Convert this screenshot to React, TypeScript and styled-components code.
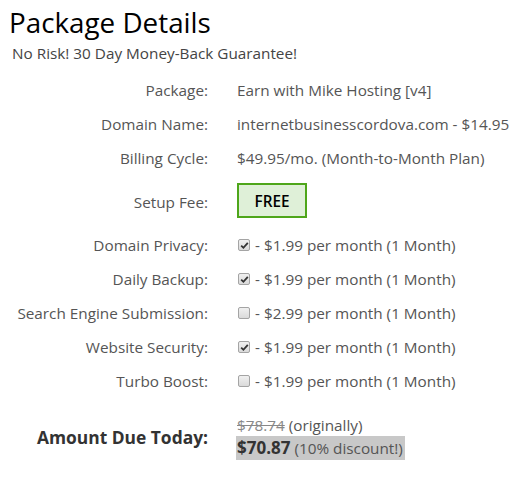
import React from "react";
import styled, { createGlobalStyle } from "styled-components";

const Global = createGlobalStyle`
  html, body { margin: 0; padding: 0; background: #fff; }
  body { font-family: "Open Sans", "Noto Sans", sans-serif; color: #555; }
`;

const Page = styled.div`
  padding: 0 10px 0 9px;
`;

const Title = styled.h1`
  margin: 0;
  padding-top: 4px;
  font-size: 27.8px;
  font-weight: 400;
  color: #000;
  line-height: 36px;
`;

const Subtitle = styled.div`
  margin: 3px 0 0 3px;
  font-size: 15.3px;
  color: #444;
  line-height: 20px;
`;

const Grid = styled.div`
  display: grid;
  grid-template-columns: 199px auto;
  column-gap: 29px;
  margin-top: 10px;
  align-items: center;
`;

const Label = styled.div<{ $bold?: boolean }>`
  text-align: right;
  font-size: ${(p) => (p.$bold ? "17.4px" : "15.3px")};
  font-weight: ${(p) => (p.$bold ? 700 : 400)};
  color: ${(p) => (p.$bold ? "#333" : "#555")};
  line-height: 34px;
  white-space: nowrap;
`;

const Value = styled.div`
  font-size: 15.3px;
  color: #555;
  line-height: 34px;
  white-space: nowrap;
  display: flex;
  align-items: center;
`;

const FreeBox = styled.div`
  margin: 8px 0 10px;
  width: 70px;
  height: 35px;
  box-sizing: border-box;
  border: 2px solid #4ea61a;
  background: #dff0d8;
  color: #000;
  font-size: 15.3px;
  font-weight: 600;
  display: flex;
  align-items: center;
  justify-content: center;
`;

const Check = styled.span`
  width: 12px;
  height: 12px;
  box-sizing: border-box;
  border: 1px solid #a4a4a4;
  border-radius: 2px;
  background: linear-gradient(#f0f0f0, #dadada);
  display: inline-flex;
  align-items: center;
  justify-content: center;
  margin: 0 5px 0 1px;
`;

const Spacer = styled.div`
  height: 16px;
  grid-column: 1 / span 2;
`;

const Amount = styled.div`
  display: flex;
  flex-direction: column;
  align-items: flex-start;
  font-size: 15.3px;
  color: #555;
`;

const Original = styled.div`
  line-height: 22px;
  s { color: #888; }
`;

const Discount = styled.div`
  background: #c8c8c8;
  line-height: 23px;
  margin-left: -1px;
  padding: 0 2px 0 1px;
  b { color: #333; font-size: 17px; }
`;

const Tick = () => (
  <svg width="9" height="9" viewBox="0 0 9 9">
    <path d="M1.2 4.6 L3.4 6.8 L7.8 1.8" fill="none" stroke="#333" strokeWidth="1.8" />
  </svg>
);

const addons: [string, boolean, string][] = [
  ["Domain Privacy:", true, "$1.99"],
  ["Daily Backup:", true, "$1.99"],
  ["Search Engine Submission:", false, "$2.99"],
  ["Website Security:", true, "$1.99"],
  ["Turbo Boost:", false, "$1.99"],
];

export default function App() {
  return (
    <Page>
      <Global />
      <Title>Package Details</Title>
      <Subtitle>No Risk! 30 Day Money-Back Guarantee!</Subtitle>
      <Grid>
        <Label>Package:</Label>
        <Value>Earn with Mike Hosting [v4]</Value>
        <Label>Domain Name:</Label>
        <Value>internetbusinesscordova.com - $14.95</Value>
        <Label>Billing Cycle:</Label>
        <Value>$49.95/mo. (Month-to-Month Plan)</Value>
        <Label>Setup Fee:</Label>
        <Value>
          <FreeBox>FREE</FreeBox>
        </Value>
        {addons.map(([l, on, p]) => (
          <React.Fragment key={l}>
            <Label>{l}</Label>
            <Value>
              <Check>{on && <Tick />}</Check>- {p} per month (1 Month)
            </Value>
          </React.Fragment>
        ))}
        <Spacer />
        <Label $bold>Amount Due Today:</Label>
        <Amount>
          <Original>
            <s>$78.74</s> (originally)
          </Original>
          <Discount>
            <b>$70.87</b> (10% discount!)
          </Discount>
        </Amount>
      </Grid>
    </Page>
  );
}
